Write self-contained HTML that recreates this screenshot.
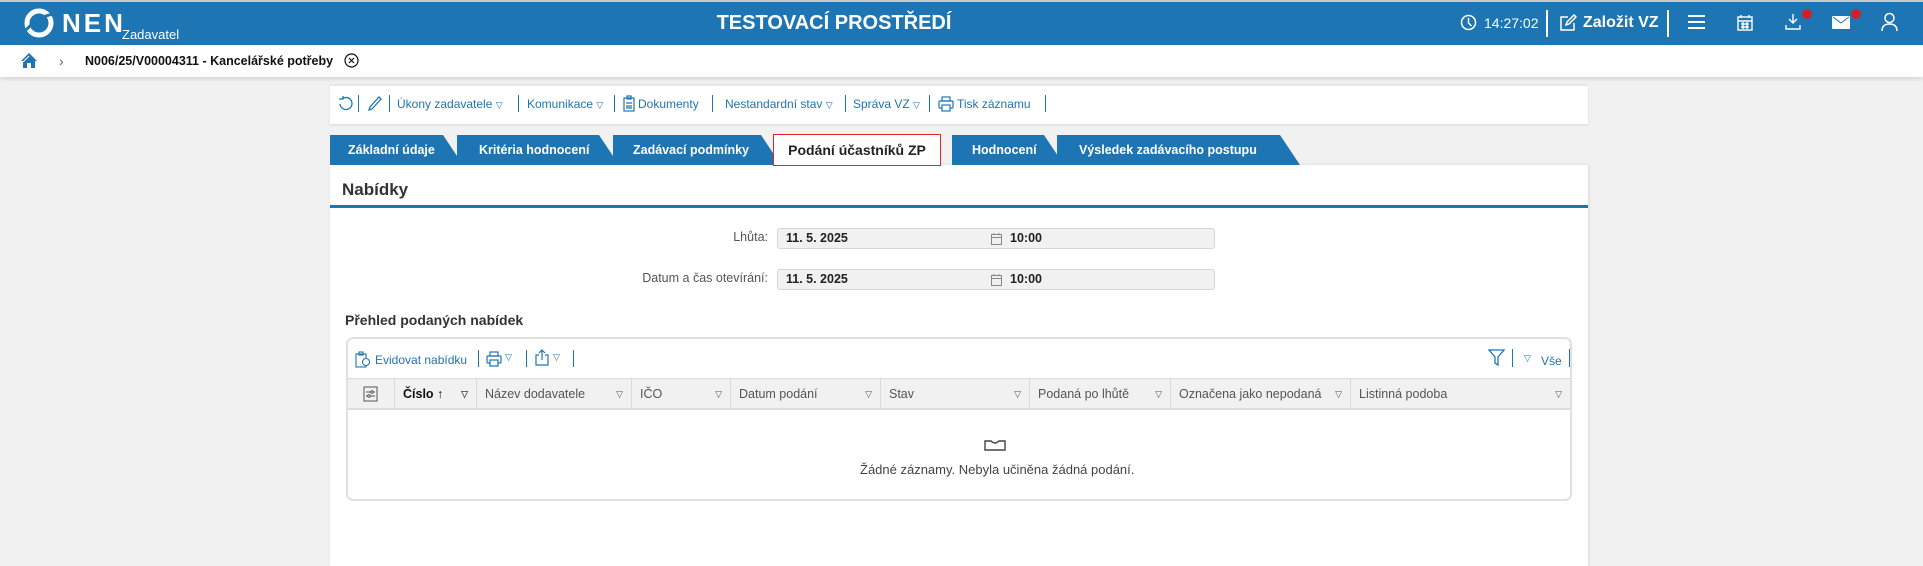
<!DOCTYPE html>
<html><head><meta charset="utf-8">
<style>
*{box-sizing:border-box;margin:0;padding:0}
body{width:1923px;height:566px;overflow:hidden;background:#f1f1f1;font-family:"Liberation Sans Narrow","Liberation Sans",sans-serif;position:relative;color:#222}
.a{position:absolute;white-space:nowrap}
#hdr{left:0;top:0;width:1923px;height:45px;background:#1e75b3;border-top:2px solid #c9c9c9}
#bc{left:0;top:45px;width:1923px;height:32px;background:#fff;box-shadow:0 2px 4px rgba(0,0,0,.12)}
.w{color:#fff}
.lnk{color:#1e75b3;font-size:12px}
.sep{position:absolute;width:1px;background:#1e75b3}
.tab{position:absolute;top:135px;height:30px;background:#1e75b3;color:#fff;font-weight:bold;font-size:12.5px;line-height:30px;padding-left:18px;clip-path:polygon(0 0,calc(100% - 20px) 0,100% 100%,0 100%)}
.th{position:absolute;top:378px;height:32px;line-height:32px;font-size:12.5px;color:#555;border-right:1px solid #d9d9d9;padding-left:8px}
.th i{position:absolute;right:8px;font-style:normal;font-size:9px;color:#555}
.inp{position:absolute;left:777px;width:438px;height:21px;background:#f1f1f1;border:1px solid #d6d6d6;border-radius:3px;font-size:12.5px;font-weight:bold;line-height:19px;padding-left:8px}
.lbl{position:absolute;font-size:12.5px;color:#555;text-align:right;width:200px;left:568px}
</style></head><body>
<div id="hdr" class="a"></div>
<svg class="a" style="left:24px;top:8px" width="34" height="30" viewBox="0 0 34 30"><circle cx="15" cy="15" r="12" fill="none" stroke="#fff" stroke-width="5"/><path d="M2 22 Q15 8 30 6" stroke="#1e75b3" stroke-width="3" fill="none"/></svg>
<div class="a w" style="left:62px;top:8px;font-size:26px;font-weight:bold;letter-spacing:3px;font-family:'Liberation Sans',sans-serif">NEN</div>
<div class="a w" style="left:122px;top:27px;font-size:13px">Zadavatel</div>
<div class="a w" style="left:700px;top:12px;width:268px;text-align:center;font-size:20px;font-weight:bold;font-family:'Liberation Sans',sans-serif">TESTOVACÍ PROSTŘEDÍ</div>
<svg class="a" style="left:1460px;top:14px" width="17" height="17" viewBox="0 0 17 17" fill="none" stroke="#fff" stroke-width="1.5"><circle cx="8.5" cy="8.5" r="7"/><path d="M8.5 4v5l3 3"/></svg>
<div class="a w" style="left:1484px;top:15px;font-size:14px;font-family:'Liberation Sans',sans-serif">14:27:02</div>
<div class="a" style="left:1546px;top:10px;width:2px;height:27px;background:#fff"></div>
<svg class="a" style="left:1559px;top:14px" width="18" height="18" viewBox="0 0 18 18" fill="none" stroke="#fff" stroke-width="1.5"><path d="M9 3H2v13h13V9"/><path d="M7 11l1-3 7-7 2 2-7 7z"/></svg>
<div class="a w" style="left:1583px;top:14px;font-size:16px;font-weight:bold;font-family:'Liberation Sans',sans-serif">Založit VZ</div>
<div class="a" style="left:1667px;top:10px;width:2px;height:27px;background:#fff"></div>
<svg class="a" style="left:1688px;top:15px" width="17" height="14"><rect y="0" width="17" height="2" fill="#fff"/><rect y="6" width="17" height="2" fill="#fff"/><rect y="12" width="17" height="2" fill="#fff"/></svg>
<svg class="a" style="left:1737px;top:14px" width="16" height="17" viewBox="0 0 16 17" fill="none" stroke="#fff" stroke-width="1.4"><rect x="1" y="3" width="14" height="13"/><path d="M4 1v3M12 1v3M1 7h14M4 10h8M4 13h8M6 8v7M10 8v7"/></svg>
<svg class="a" style="left:1784px;top:13px" width="18" height="18" viewBox="0 0 18 18" fill="none" stroke="#fff" stroke-width="1.4"><path d="M9 1v9M5 6l4 4 4-4M2 12v4h14v-4"/></svg>
<div class="a" style="left:1802px;top:9px;width:10px;height:10px;border-radius:50%;background:#d0202a"></div>
<svg class="a" style="left:1832px;top:16px" width="18" height="13" viewBox="0 0 18 13"><rect width="18" height="13" rx="1" fill="#fff"/><path d="M1 1l8 6 8-6" stroke="#1e75b3" fill="none"/></svg>
<div class="a" style="left:1851px;top:9px;width:10px;height:10px;border-radius:50%;background:#d0202a"></div>
<svg class="a" style="left:1881px;top:12px" width="17" height="20" viewBox="0 0 17 20" fill="none" stroke="#fff" stroke-width="1.5"><circle cx="8.5" cy="6" r="4.5"/><path d="M1 19q0-7 7.5-7t7.5 7"/></svg>

<div id="bc" class="a"></div>
<svg class="a" style="left:20px;top:52px" width="18" height="17" viewBox="0 0 18 17"><path d="M9 1L1 9h2v7h4v-5h4v5h4V9h2z" fill="#1e75b3"/><path d="M9 4L3 10" stroke="#fff" stroke-width="1"/></svg>
<div class="a" style="left:59px;top:53px;font-size:14px;color:#666">›</div>
<div class="a" style="left:85px;top:54px;font-size:12.5px;font-weight:bold;color:#111">N006/25/V00004311 - Kancelářské potřeby</div>
<svg class="a" style="left:344px;top:53px" width="15" height="15"><circle cx="7.5" cy="7.5" r="6.5" fill="none" stroke="#111" stroke-width="1.2"/><path d="M5 5l5 5M10 5l-5 5" stroke="#111" stroke-width="1.2"/></svg>

<div class="a" style="left:330px;top:84px;width:1258px;height:40px;background:#fff;border-top:2px solid #e8e8e8;box-shadow:0 1px 2px rgba(0,0,0,.1)"></div>
<div class="a" style="left:330px;top:165px;width:1258px;height:401px;background:#fff;box-shadow:1px 0 3px rgba(0,0,0,.1)"></div>
<svg class="a" style="left:338px;top:96px" width="16" height="16" viewBox="0 0 16 16" fill="none" stroke="#1e75b3" stroke-width="1.3"><path d="M4 3a6 6 0 1 1-2 5"/><path d="M1 3h4V0"/></svg>
<div class="sep" style="left:358px;top:95px;height:17px"></div>
<svg class="a" style="left:367px;top:95px" width="16" height="17" viewBox="0 0 16 17" fill="none" stroke="#1e75b3" stroke-width="1.3"><path d="M3 12L12 2l2 2-9 10-3 1z"/></svg>
<div class="sep" style="left:389px;top:95px;height:17px"></div>
<div class="a lnk" style="left:397px;top:97px">Úkony zadavatele <span style="font-size:9px">▽</span></div>
<div class="sep" style="left:518px;top:95px;height:17px"></div>
<div class="a lnk" style="left:527px;top:97px">Komunikace <span style="font-size:9px">▽</span></div>
<div class="sep" style="left:614px;top:95px;height:17px"></div>
<svg class="a" style="left:623px;top:95px" width="12" height="17" viewBox="0 0 12 17" fill="none" stroke="#1e75b3" stroke-width="1.2"><rect x="1" y="3" width="10" height="13"/><rect x="4" y="1" width="4" height="3"/><path d="M3 8h6M3 11h6M3 13h6"/></svg>
<div class="a lnk" style="left:638px;top:97px">Dokumenty</div>
<div class="sep" style="left:712px;top:95px;height:17px"></div>
<div class="a lnk" style="left:725px;top:97px">Nestandardní stav <span style="font-size:9px">▽</span></div>
<div class="sep" style="left:845px;top:95px;height:17px"></div>
<div class="a lnk" style="left:853px;top:97px">Správa VZ <span style="font-size:9px">▽</span></div>
<div class="sep" style="left:929px;top:95px;height:17px"></div>
<svg class="a" style="left:938px;top:96px" width="16" height="16" viewBox="0 0 16 16" fill="none" stroke="#1e75b3" stroke-width="1.2"><rect x="4" y="1" width="8" height="4"/><rect x="1" y="5" width="14" height="7" rx="1"/><rect x="4" y="9" width="8" height="6" fill="#fff"/></svg>
<div class="a lnk" style="left:957px;top:97px">Tisk záznamu</div>
<div class="sep" style="left:1045px;top:95px;height:17px"></div>

<div class="tab" style="left:330px;width:133px">Základní údaje</div>
<div class="tab" style="left:457px;width:162px;padding-left:22px">Kritéria hodnocení</div>
<div class="tab" style="left:613px;width:168px;padding-left:20px">Zadávací podmínky</div>
<div class="a" style="left:773px;top:134px;width:168px;height:32px;background:#fff;border:1px solid #e0242c;font-weight:bold;font-size:14px;line-height:30px;text-align:center">Podání účastníků ZP</div>
<div class="tab" style="left:952px;width:112px;padding-left:20px">Hodnocení</div>
<div class="tab" style="left:1057px;width:243px;padding-left:22px">Výsledek zadávacího postupu</div>

<div class="a" style="left:342px;top:180px;font-size:17px;font-weight:bold;color:#333">Nabídky</div>
<div class="a" style="left:330px;top:205px;width:1258px;height:3px;background:#1e75b3"></div>

<div class="lbl" style="top:230px">Lhůta:</div>
<div class="inp" style="top:228px">11. 5. 2025<svg style="position:absolute;left:213px;top:4px" width="11" height="12" viewBox="0 0 11 12" fill="none" stroke="#888"><rect x=".5" y="1.5" width="10" height="10"/><path d="M.5 4.5h10M3 0v2M8 0v2"/></svg><span style="position:absolute;left:232px">10:00</span></div>
<div class="lbl" style="top:271px">Datum a čas otevírání:</div>
<div class="inp" style="top:269px">11. 5. 2025<svg style="position:absolute;left:213px;top:4px" width="11" height="12" viewBox="0 0 11 12" fill="none" stroke="#888"><rect x=".5" y="1.5" width="10" height="10"/><path d="M.5 4.5h10M3 0v2M8 0v2"/></svg><span style="position:absolute;left:232px">10:00</span></div>

<div class="a" style="left:345px;top:312px;font-size:14px;font-weight:bold;color:#333">Přehled podaných nabídek</div>

<div class="a" style="left:346px;top:337px;width:1226px;height:164px;border:2px solid #e0e0e0;border-radius:7px;background:#fff"></div>
<svg class="a" style="left:355px;top:351px" width="16" height="17" viewBox="0 0 16 17" fill="none" stroke="#1e75b3" stroke-width="1.1"><rect x="1" y="3" width="10" height="13"/><rect x="4" y="1" width="4" height="3"/><circle cx="11" cy="11" r="3.5" fill="#fff"/></svg>
<div class="a lnk" style="left:375px;top:353px">Evidovat nabídku</div>
<div class="sep" style="left:478px;top:350px;height:17px"></div>
<svg class="a" style="left:486px;top:351px" width="16" height="16" viewBox="0 0 16 16" fill="none" stroke="#1e75b3" stroke-width="1.2"><rect x="4" y="1" width="8" height="4"/><rect x="1" y="5" width="14" height="7" rx="1"/><rect x="4" y="9" width="8" height="6" fill="#fff"/></svg>
<div class="a lnk" style="left:505px;top:352px;font-size:9px">▽</div>
<div class="sep" style="left:526px;top:350px;height:17px"></div>
<svg class="a" style="left:535px;top:349px" width="14" height="17" viewBox="0 0 14 17" fill="none" stroke="#1e75b3" stroke-width="1.2"><path d="M4 6H1v10h12V6h-3M7 11V1M4 4l3-3 3 3"/></svg>
<div class="a lnk" style="left:553px;top:352px;font-size:9px">▽</div>
<div class="sep" style="left:573px;top:350px;height:17px"></div>
<svg class="a" style="left:1488px;top:349px" width="17" height="17" viewBox="0 0 17 17" fill="none" stroke="#1e75b3" stroke-width="1.3"><path d="M1 1h15l-6 7v8l-3-2V8z"/></svg>
<div class="sep" style="left:1512px;top:349px;height:18px"></div>
<div class="a lnk" style="left:1524px;top:353px;font-size:9px">▽</div>
<div class="a lnk" style="left:1541px;top:354px">Vše</div>
<div class="sep" style="left:1569px;top:349px;height:18px"></div>

<div class="a" style="left:348px;top:378px;width:1222px;height:32px;background:#f1f1f1;border-top:1px solid #ddd;border-bottom:2px solid #ddd"></div>
<div class="th" style="left:348px;width:47px"><svg style="position:absolute;left:15px;top:8px" width="15" height="16" viewBox="0 0 15 16" fill="none" stroke="#555" stroke-width="1"><rect x="1" y="1" width="13" height="14"/><path d="M3 6h9M3 10h9"/><circle cx="9" cy="6" r="1.3" fill="#f1f1f1"/><circle cx="6" cy="10" r="1.3" fill="#f1f1f1"/></svg></div>
<div class="th" style="left:395px;width:82px;color:#111;font-weight:bold">Číslo <span style="font-weight:normal">↑</span><i>▽</i></div>
<div class="th" style="left:477px;width:155px">Název dodavatele<i>▽</i></div>
<div class="th" style="left:632px;width:99px">IČO<i>▽</i></div>
<div class="th" style="left:731px;width:150px">Datum podání<i>▽</i></div>
<div class="th" style="left:881px;width:149px">Stav<i>▽</i></div>
<div class="th" style="left:1030px;width:141px">Podaná po lhůtě<i>▽</i></div>
<div class="th" style="left:1171px;width:180px">Označena jako nepodaná<i>▽</i></div>
<div class="th" style="left:1351px;width:219px;border-right:none">Listinná podoba<i>▽</i></div>

<svg class="a" style="left:984px;top:440px" width="22" height="11" viewBox="0 0 22 11" fill="none" stroke="#444" stroke-width="1.4"><path d="M1 1h6q4 4 8 0h6v9H1z"/></svg>
<div class="a" style="left:860px;top:462px;width:270px;text-align:center;font-size:13px;color:#444">Žádné záznamy. Nebyla učiněna žádná podání.</div>
</body></html>
